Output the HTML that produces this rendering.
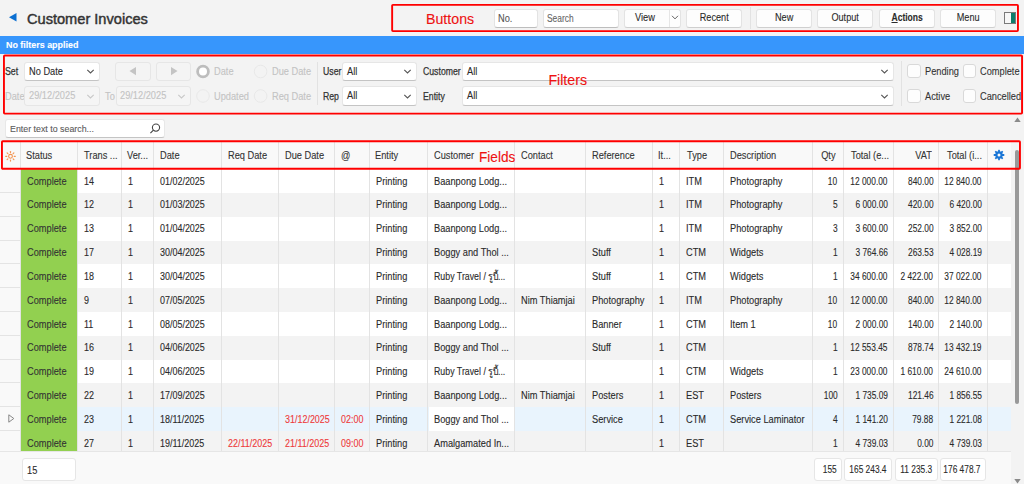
<!DOCTYPE html>
<html><head><meta charset="utf-8"><style>
html,body{margin:0;padding:0;}
body{width:1024px;height:484px;overflow:hidden;position:relative;background:#f3f3f3;font-family:"Liberation Sans", sans-serif;}
div{font-family:"Liberation Sans", sans-serif;-webkit-text-stroke:0.1px currentColor;}
</style></head><body>
<svg style="position:absolute;left:0;top:0" width="30" height="34"><path d="M16.5 13 L9 17.2 L16.5 21.5 Z" fill="#0b6fd1"/></svg><div style="position:absolute;left:27px;top:11.64px;font-size:14.6px;line-height:14.6px;color:#333;font-weight:400;white-space:nowrap;-webkit-text-stroke:0.45px #333;">Customer Invoices</div><div style="position:absolute;left:426px;top:11.68px;font-size:14.2px;line-height:14.2px;color:#ee1111;font-weight:400;white-space:nowrap;">Buttons</div><div style="position:absolute;left:493.5px;top:9px;width:44.5px;height:19px;background:#fff;border:1px solid #e3e3e3;border-bottom-color:#bdbdbd;border-radius:3px;box-sizing:border-box;"></div><div style="position:absolute;left:497.8px;top:13.84px;font-size:10px;line-height:10px;color:#555;font-weight:400;white-space:nowrap;transform:scaleX(0.925);transform-origin:left;">No.</div><div style="position:absolute;left:543.3px;top:9px;width:75.7px;height:19px;background:#fff;border:1px solid #e3e3e3;border-bottom-color:#bdbdbd;border-radius:3px;box-sizing:border-box;"></div><div style="position:absolute;left:547.2px;top:13.84px;font-size:10px;line-height:10px;color:#666;font-weight:400;white-space:nowrap;transform:scaleX(0.84);transform-origin:left;">Search</div><div style="position:absolute;left:624px;top:8.7px;width:56.5px;height:19.1px;background:#fdfdfd;border:1px solid #e3e3e3;border-bottom-color:#cfcfcf;border-radius:3px;box-sizing:border-box;"></div><div style="position:absolute;left:622.3px;width:46px;text-align:center;top:13.23px;font-size:10px;line-height:10px;color:#2b2b2b;font-weight:400;white-space:nowrap;transform:scaleX(0.925);">View</div><div style="position:absolute;left:669.2px;top:9.5px;width:1px;height:17.5px;background:#e6e6e6;"></div><svg style="position:absolute;left:671px;top:13px" width="9" height="8"><path d="M1 2.8 L4 5.9 L7 2.8" fill="none" stroke="#555" stroke-width="0.9"/></svg><div style="position:absolute;left:685.7px;top:8.7px;width:56.5px;height:19.1px;background:#fdfdfd;border:1px solid #e3e3e3;border-bottom-color:#cfcfcf;border-radius:3px;box-sizing:border-box;"></div><div style="position:absolute;left:685.7px;width:56.5px;text-align:center;top:13.23px;font-size:10px;line-height:10px;color:#2b2b2b;font-weight:400;white-space:nowrap;transform:scaleX(0.915);">Recent</div><div style="position:absolute;left:749.5px;top:7px;width:1px;height:22px;background:#e2e2e2;"></div><div style="position:absolute;left:755.8px;top:8.7px;width:56.30000000000007px;height:19.1px;background:#fdfdfd;border:1px solid #e3e3e3;border-bottom-color:#cfcfcf;border-radius:3px;box-sizing:border-box;"></div><div style="position:absolute;left:755.8px;width:56.30000000000007px;text-align:center;top:13.23px;font-size:10px;line-height:10px;color:#2b2b2b;font-weight:400;white-space:nowrap;transform:scaleX(0.915);">New</div><div style="position:absolute;left:816.8px;top:8.7px;width:56.30000000000007px;height:19.1px;background:#fdfdfd;border:1px solid #e3e3e3;border-bottom-color:#cfcfcf;border-radius:3px;box-sizing:border-box;"></div><div style="position:absolute;left:816.8px;width:56.30000000000007px;text-align:center;top:13.23px;font-size:10px;line-height:10px;color:#2b2b2b;font-weight:400;white-space:nowrap;transform:scaleX(0.915);">Output</div><div style="position:absolute;left:878.7px;top:8.7px;width:56.299999999999955px;height:19.1px;background:#fdfdfd;border:1px solid #e3e3e3;border-bottom-color:#cfcfcf;border-radius:3px;box-sizing:border-box;"></div><div style="position:absolute;left:878.7px;width:56.299999999999955px;text-align:center;top:13.23px;font-size:10px;line-height:10px;color:#2b2b2b;font-weight:700;white-space:nowrap;transform:scaleX(0.855);"><u>A</u>ctions</div><div style="position:absolute;left:940.2px;top:8.7px;width:56.299999999999955px;height:19.1px;background:#fdfdfd;border:1px solid #e3e3e3;border-bottom-color:#cfcfcf;border-radius:3px;box-sizing:border-box;"></div><div style="position:absolute;left:940.2px;width:56.299999999999955px;text-align:center;top:13.23px;font-size:10px;line-height:10px;color:#2b2b2b;font-weight:400;white-space:nowrap;transform:scaleX(0.915);">Menu</div><div style="position:absolute;left:1004.2px;top:11.5px;width:11.8px;height:12.3px;border:1px solid #7a7a7a;background:#f7f7f7;box-sizing:border-box;"></div><div style="position:absolute;left:1011px;top:12.5px;width:4px;height:10.3px;background:#0e7c6b;"></div><div style="position:absolute;left:0px;top:36px;width:1024px;height:17.7px;background:#3796fc;"></div><div style="position:absolute;left:6px;top:40.17px;font-size:9.6px;line-height:9.6px;color:#fff;font-weight:700;white-space:nowrap;transform:scaleX(0.93);transform-origin:left;">No filters applied</div><div style="position:absolute;left:5px;top:67.03px;font-size:10px;line-height:10px;color:#333;font-weight:400;white-space:nowrap;transform:scaleX(0.88);transform-origin:left;-webkit-text-stroke:0.25px #333;">Set</div><div style="position:absolute;left:24.3px;top:61.5px;width:76.0px;height:19.5px;background:#fff;border:1px solid #e6e6e6;border-bottom-color:#c4c4c4;border-radius:3px;box-sizing:border-box;"></div><div style="position:absolute;left:28.9px;top:66.63px;font-size:10px;line-height:10px;color:#2b2b2b;font-weight:400;white-space:nowrap;transform:scaleX(0.925);transform-origin:left;">No Date</div><svg style="position:absolute;left:86.0px;top:68.0px" width="9" height="7"><path d="M1.3 1.8 L4.5 5 L7.7 1.8" fill="none" stroke="#555" stroke-width="1.1"/></svg><div style="position:absolute;left:5px;top:91.53px;font-size:10px;line-height:10px;color:#c3c3c3;font-weight:400;white-space:nowrap;transform:scaleX(0.925);transform-origin:left;">Date</div><div style="position:absolute;left:24.3px;top:86px;width:76.0px;height:19.5px;background:#f5f5f5;border:1px solid #e6e6e6;border-radius:3px;box-sizing:border-box;"></div><div style="position:absolute;left:28.9px;top:91.13px;font-size:10px;line-height:10px;color:#c3c3c3;font-weight:400;white-space:nowrap;transform:scaleX(0.925);transform-origin:left;">29/12/2025</div><svg style="position:absolute;left:86.0px;top:92.5px" width="9" height="7"><path d="M1.3 1.8 L4.5 5 L7.7 1.8" fill="none" stroke="#c8c8c8" stroke-width="1.1"/></svg><div style="position:absolute;left:115.3px;top:61.5px;width:36px;height:19.8px;background:#f4f4f4;border:1px solid #e6e6e6;border-radius:3px;box-sizing:border-box;"></div><div style="position:absolute;left:156.3px;top:61.5px;width:34.6px;height:19.8px;background:#f4f4f4;border:1px solid #e6e6e6;border-radius:3px;box-sizing:border-box;"></div><svg style="position:absolute;left:0;top:0" width="200" height="90"><path d="M129.5 71 L136 67 L136 75.2 Z" fill="#c4c4c4"/><path d="M177.5 71 L171 67 L171 75.2 Z" fill="#c4c4c4"/></svg><div style="position:absolute;left:104.6px;top:91.53px;font-size:10px;line-height:10px;color:#c3c3c3;font-weight:400;white-space:nowrap;transform:scaleX(0.925);transform-origin:left;">To</div><div style="position:absolute;left:115.6px;top:86px;width:75.80000000000001px;height:19.5px;background:#f5f5f5;border:1px solid #e6e6e6;border-radius:3px;box-sizing:border-box;"></div><div style="position:absolute;left:120.19999999999999px;top:91.13px;font-size:10px;line-height:10px;color:#c3c3c3;font-weight:400;white-space:nowrap;transform:scaleX(0.925);transform-origin:left;">29/12/2025</div><svg style="position:absolute;left:177.1px;top:92.5px" width="9" height="7"><path d="M1.3 1.8 L4.5 5 L7.7 1.8" fill="none" stroke="#c8c8c8" stroke-width="1.1"/></svg><svg style="position:absolute;left:0;top:0" width="320" height="110"><circle cx="203" cy="71.5" r="5.4" fill="#fff" stroke="#bdbdbd" stroke-width="2.8"/><circle cx="260.6" cy="71.5" r="6.3" fill="none" stroke="#e6e6e6" stroke-width="0.9"/><circle cx="203" cy="96" r="6.3" fill="none" stroke="#e6e6e6" stroke-width="0.9"/><circle cx="260.6" cy="96" r="6.3" fill="none" stroke="#e6e6e6" stroke-width="0.9"/></svg><div style="position:absolute;left:214px;top:67.03px;font-size:10px;line-height:10px;color:#c3c3c3;font-weight:400;white-space:nowrap;transform:scaleX(0.925);transform-origin:left;">Date</div><div style="position:absolute;left:271.8px;top:67.03px;font-size:10px;line-height:10px;color:#c3c3c3;font-weight:400;white-space:nowrap;transform:scaleX(0.925);transform-origin:left;">Due Date</div><div style="position:absolute;left:214px;top:91.53px;font-size:10px;line-height:10px;color:#c3c3c3;font-weight:400;white-space:nowrap;transform:scaleX(0.925);transform-origin:left;">Updated</div><div style="position:absolute;left:271.8px;top:91.53px;font-size:10px;line-height:10px;color:#c3c3c3;font-weight:400;white-space:nowrap;transform:scaleX(0.925);transform-origin:left;">Req Date</div><div style="position:absolute;left:316.5px;top:61.5px;width:1px;height:43.5px;background:#e2e2e2;"></div><div style="position:absolute;left:322.5px;top:67.03px;font-size:10px;line-height:10px;color:#333;font-weight:400;white-space:nowrap;transform:scaleX(0.87);transform-origin:left;-webkit-text-stroke:0.25px #333;">User</div><div style="position:absolute;left:341.9px;top:61.5px;width:75.40000000000003px;height:19.5px;background:#fff;border:1px solid #e6e6e6;border-bottom-color:#c4c4c4;border-radius:3px;box-sizing:border-box;"></div><div style="position:absolute;left:346.5px;top:66.63px;font-size:10px;line-height:10px;color:#2b2b2b;font-weight:400;white-space:nowrap;transform:scaleX(0.925);transform-origin:left;">All</div><svg style="position:absolute;left:403.0px;top:68.0px" width="9" height="7"><path d="M1.3 1.8 L4.5 5 L7.7 1.8" fill="none" stroke="#555" stroke-width="1.1"/></svg><div style="position:absolute;left:322.5px;top:91.53px;font-size:10px;line-height:10px;color:#333;font-weight:400;white-space:nowrap;transform:scaleX(0.87);transform-origin:left;-webkit-text-stroke:0.25px #333;">Rep</div><div style="position:absolute;left:341.9px;top:86px;width:75.40000000000003px;height:19.5px;background:#fff;border:1px solid #e6e6e6;border-bottom-color:#c4c4c4;border-radius:3px;box-sizing:border-box;"></div><div style="position:absolute;left:346.5px;top:91.13px;font-size:10px;line-height:10px;color:#2b2b2b;font-weight:400;white-space:nowrap;transform:scaleX(0.925);transform-origin:left;">All</div><svg style="position:absolute;left:403.0px;top:92.5px" width="9" height="7"><path d="M1.3 1.8 L4.5 5 L7.7 1.8" fill="none" stroke="#555" stroke-width="1.1"/></svg><div style="position:absolute;left:422.5px;top:67.03px;font-size:10px;line-height:10px;color:#333;font-weight:400;white-space:nowrap;transform:scaleX(0.87);transform-origin:left;-webkit-text-stroke:0.25px #333;">Customer</div><div style="position:absolute;left:461.9px;top:61.5px;width:432.5px;height:19.5px;background:#fff;border:1px solid #e6e6e6;border-bottom-color:#c4c4c4;border-radius:3px;box-sizing:border-box;"></div><div style="position:absolute;left:466.5px;top:66.63px;font-size:10px;line-height:10px;color:#2b2b2b;font-weight:400;white-space:nowrap;transform:scaleX(0.925);transform-origin:left;">All</div><svg style="position:absolute;left:880.1px;top:68.0px" width="9" height="7"><path d="M1.3 1.8 L4.5 5 L7.7 1.8" fill="none" stroke="#555" stroke-width="1.1"/></svg><div style="position:absolute;left:422.5px;top:91.53px;font-size:10px;line-height:10px;color:#333;font-weight:400;white-space:nowrap;transform:scaleX(0.87);transform-origin:left;-webkit-text-stroke:0.25px #333;">Entity</div><div style="position:absolute;left:461.9px;top:86px;width:432.5px;height:19.5px;background:#fff;border:1px solid #e6e6e6;border-bottom-color:#c4c4c4;border-radius:3px;box-sizing:border-box;"></div><div style="position:absolute;left:466.5px;top:91.13px;font-size:10px;line-height:10px;color:#2b2b2b;font-weight:400;white-space:nowrap;transform:scaleX(0.925);transform-origin:left;">All</div><svg style="position:absolute;left:880.1px;top:92.5px" width="9" height="7"><path d="M1.3 1.8 L4.5 5 L7.7 1.8" fill="none" stroke="#555" stroke-width="1.1"/></svg><div style="position:absolute;left:901.3px;top:61px;width:1px;height:44.5px;background:#e2e2e2;"></div><div style="position:absolute;left:907.2px;top:64.3px;width:13.4px;height:13.8px;background:#fdfdfd;border:1px solid #d9d9d9;border-radius:3px;box-sizing:border-box;"></div><div style="position:absolute;left:962.5px;top:64.3px;width:13.4px;height:13.8px;background:#fdfdfd;border:1px solid #d9d9d9;border-radius:3px;box-sizing:border-box;"></div><div style="position:absolute;left:907.2px;top:89.2px;width:13.4px;height:13.8px;background:#fdfdfd;border:1px solid #d9d9d9;border-radius:3px;box-sizing:border-box;"></div><div style="position:absolute;left:962.5px;top:89.2px;width:13.4px;height:13.8px;background:#fdfdfd;border:1px solid #d9d9d9;border-radius:3px;box-sizing:border-box;"></div><div style="position:absolute;left:925px;top:67.03px;font-size:10px;line-height:10px;color:#333;font-weight:400;white-space:nowrap;transform:scaleX(0.925);transform-origin:left;">Pending</div><div style="position:absolute;left:980.4px;top:67.03px;font-size:10px;line-height:10px;color:#333;font-weight:400;white-space:nowrap;transform:scaleX(0.925);transform-origin:left;">Complete</div><div style="position:absolute;left:925px;top:91.53px;font-size:10px;line-height:10px;color:#333;font-weight:400;white-space:nowrap;transform:scaleX(0.925);transform-origin:left;">Active</div><div style="position:absolute;left:980.4px;top:91.53px;font-size:10px;line-height:10px;color:#333;font-weight:400;white-space:nowrap;transform:scaleX(0.925);transform-origin:left;">Cancelled</div><div style="position:absolute;left:548.4px;top:73.28px;font-size:14.2px;line-height:14.2px;color:#ee1111;font-weight:400;white-space:nowrap;">Filters</div><div style="position:absolute;left:5.4px;top:118.9px;width:160px;height:19.3px;background:#fff;border:1px solid #e8e8e8;border-bottom-color:#c4c4c4;border-radius:3px;box-sizing:border-box;"></div><div style="position:absolute;left:9.7px;top:124.73px;font-size:9.3px;line-height:9.3px;color:#5a5a5a;font-weight:400;white-space:nowrap;transform:scaleX(0.95);transform-origin:left;">Enter text to search...</div><svg style="position:absolute;left:148px;top:122px" width="14" height="13"><circle cx="8" cy="5.6" r="3.6" fill="none" stroke="#444" stroke-width="1.1"/><path d="M5.4 8.2 L2.4 11.2" stroke="#444" stroke-width="1.2"/></svg><svg style="position:absolute;left:1012px;top:115px" width="12" height="10"><path d="M2.3 7 L5.5 2.5 L8.7 7 Z" fill="#8a8a8a"/></svg><div style="position:absolute;left:0px;top:142.4px;width:1011px;height:26.69999999999999px;background:#f9f9f9;"></div><div style="position:absolute;left:20.4px;top:169.1px;width:990.6px;height:23.82px;background:#ffffff;"></div><div style="position:absolute;left:0px;top:169.1px;width:20.4px;height:23.82px;background:#f9f9f9;"></div><div style="position:absolute;left:0px;top:192px;width:20px;height:1px;background:#e4e4e4;"></div><div style="position:absolute;left:20.4px;top:192.92px;width:990.6px;height:23.82px;background:#f3f3f3;"></div><div style="position:absolute;left:0px;top:192.92px;width:20.4px;height:23.82px;background:#f9f9f9;"></div><div style="position:absolute;left:0px;top:216px;width:20px;height:1px;background:#e4e4e4;"></div><div style="position:absolute;left:20.4px;top:216.74px;width:990.6px;height:23.82px;background:#ffffff;"></div><div style="position:absolute;left:0px;top:216.74px;width:20.4px;height:23.82px;background:#f9f9f9;"></div><div style="position:absolute;left:0px;top:240px;width:20px;height:1px;background:#e4e4e4;"></div><div style="position:absolute;left:20.4px;top:240.56px;width:990.6px;height:23.82px;background:#f3f3f3;"></div><div style="position:absolute;left:0px;top:240.56px;width:20.4px;height:23.82px;background:#f9f9f9;"></div><div style="position:absolute;left:0px;top:263px;width:20px;height:1px;background:#e4e4e4;"></div><div style="position:absolute;left:20.4px;top:264.38px;width:990.6px;height:23.82px;background:#ffffff;"></div><div style="position:absolute;left:0px;top:264.38px;width:20.4px;height:23.82px;background:#f9f9f9;"></div><div style="position:absolute;left:0px;top:287px;width:20px;height:1px;background:#e4e4e4;"></div><div style="position:absolute;left:20.4px;top:288.2px;width:990.6px;height:23.82px;background:#f3f3f3;"></div><div style="position:absolute;left:0px;top:288.2px;width:20.4px;height:23.82px;background:#f9f9f9;"></div><div style="position:absolute;left:0px;top:311px;width:20px;height:1px;background:#e4e4e4;"></div><div style="position:absolute;left:20.4px;top:312.02px;width:990.6px;height:23.82px;background:#ffffff;"></div><div style="position:absolute;left:0px;top:312.02px;width:20.4px;height:23.82px;background:#f9f9f9;"></div><div style="position:absolute;left:0px;top:335px;width:20px;height:1px;background:#e4e4e4;"></div><div style="position:absolute;left:20.4px;top:335.84px;width:990.6px;height:23.82px;background:#f3f3f3;"></div><div style="position:absolute;left:0px;top:335.84px;width:20.4px;height:23.82px;background:#f9f9f9;"></div><div style="position:absolute;left:0px;top:359px;width:20px;height:1px;background:#e4e4e4;"></div><div style="position:absolute;left:20.4px;top:359.66px;width:990.6px;height:23.82px;background:#ffffff;"></div><div style="position:absolute;left:0px;top:359.66px;width:20.4px;height:23.82px;background:#f9f9f9;"></div><div style="position:absolute;left:0px;top:382px;width:20px;height:1px;background:#e4e4e4;"></div><div style="position:absolute;left:20.4px;top:383.48px;width:990.6px;height:23.82px;background:#f3f3f3;"></div><div style="position:absolute;left:0px;top:383.48px;width:20.4px;height:23.82px;background:#f9f9f9;"></div><div style="position:absolute;left:0px;top:406px;width:20px;height:1px;background:#e4e4e4;"></div><div style="position:absolute;left:20.4px;top:407.3px;width:990.6px;height:23.82px;background:#e9f4fd;"></div><div style="position:absolute;left:0px;top:407.3px;width:20.4px;height:23.82px;background:#f9f9f9;"></div><div style="position:absolute;left:0px;top:430px;width:20px;height:1px;background:#e4e4e4;"></div><div style="position:absolute;left:20.4px;top:431.12px;width:990.6px;height:19.98px;background:#f3f3f3;"></div><div style="position:absolute;left:0px;top:431.12px;width:20.4px;height:19.98px;background:#f9f9f9;"></div><div style="position:absolute;left:21px;top:169.1px;width:56.3px;height:282.0px;background:#92d050;"></div><div style="position:absolute;left:428.5px;top:407.29999999999995px;width:86.20000000000005px;height:23.82px;background:#ffffff;"></div><div style="position:absolute;left:19.9px;top:142.4px;width:1px;height:308.70000000000005px;background:#e3e3e3;"></div><div style="position:absolute;left:76.8px;top:142.4px;width:1px;height:308.70000000000005px;background:#e3e3e3;"></div><div style="position:absolute;left:120.7px;top:142.4px;width:1px;height:308.70000000000005px;background:#e3e3e3;"></div><div style="position:absolute;left:152.9px;top:142.4px;width:1px;height:308.70000000000005px;background:#e3e3e3;"></div><div style="position:absolute;left:221.1px;top:142.4px;width:1px;height:308.70000000000005px;background:#e3e3e3;"></div><div style="position:absolute;left:278.2px;top:142.4px;width:1px;height:308.70000000000005px;background:#e3e3e3;"></div><div style="position:absolute;left:334.0px;top:142.4px;width:1px;height:308.70000000000005px;background:#e3e3e3;"></div><div style="position:absolute;left:368.8px;top:142.4px;width:1px;height:308.70000000000005px;background:#e3e3e3;"></div><div style="position:absolute;left:427.0px;top:142.4px;width:1px;height:308.70000000000005px;background:#e3e3e3;"></div><div style="position:absolute;left:514.2px;top:142.4px;width:1px;height:308.70000000000005px;background:#e3e3e3;"></div><div style="position:absolute;left:584.9px;top:142.4px;width:1px;height:308.70000000000005px;background:#e3e3e3;"></div><div style="position:absolute;left:652.2px;top:142.4px;width:1px;height:308.70000000000005px;background:#e3e3e3;"></div><div style="position:absolute;left:679.2px;top:142.4px;width:1px;height:308.70000000000005px;background:#e3e3e3;"></div><div style="position:absolute;left:722.9px;top:142.4px;width:1px;height:308.70000000000005px;background:#e3e3e3;"></div><div style="position:absolute;left:812.1px;top:142.4px;width:1px;height:308.70000000000005px;background:#e3e3e3;"></div><div style="position:absolute;left:842.6px;top:142.4px;width:1px;height:308.70000000000005px;background:#e3e3e3;"></div><div style="position:absolute;left:893.1px;top:142.4px;width:1px;height:308.70000000000005px;background:#e3e3e3;"></div><div style="position:absolute;left:938.4px;top:142.4px;width:1px;height:308.70000000000005px;background:#e3e3e3;"></div><div style="position:absolute;left:987.2px;top:142.4px;width:1px;height:308.70000000000005px;background:#e3e3e3;"></div><div style="position:absolute;left:26.4px;top:150.53px;font-size:10px;line-height:10px;color:#333;font-weight:400;white-space:nowrap;transform:scaleX(0.925);transform-origin:left;">Status</div><div style="position:absolute;left:83.5px;top:150.53px;font-size:10px;line-height:10px;color:#333;font-weight:400;white-space:nowrap;transform:scaleX(0.925);transform-origin:left;">Trans ...</div><div style="position:absolute;left:127px;top:150.53px;font-size:10px;line-height:10px;color:#333;font-weight:400;white-space:nowrap;transform:scaleX(0.925);transform-origin:left;">Ver...</div><div style="position:absolute;left:159.5px;top:150.53px;font-size:10px;line-height:10px;color:#333;font-weight:400;white-space:nowrap;transform:scaleX(0.925);transform-origin:left;">Date</div><div style="position:absolute;left:227.9px;top:150.53px;font-size:10px;line-height:10px;color:#333;font-weight:400;white-space:nowrap;transform:scaleX(0.925);transform-origin:left;">Req Date</div><div style="position:absolute;left:284.6px;top:150.53px;font-size:10px;line-height:10px;color:#333;font-weight:400;white-space:nowrap;transform:scaleX(0.925);transform-origin:left;">Due Date</div><div style="position:absolute;left:340.8px;top:150.53px;font-size:10px;line-height:10px;color:#333;font-weight:400;white-space:nowrap;transform:scaleX(0.925);transform-origin:left;">@</div><div style="position:absolute;left:375.2px;top:150.53px;font-size:10px;line-height:10px;color:#333;font-weight:400;white-space:nowrap;transform:scaleX(0.925);transform-origin:left;">Entity</div><div style="position:absolute;left:433.8px;top:150.53px;font-size:10px;line-height:10px;color:#333;font-weight:400;white-space:nowrap;transform:scaleX(0.925);transform-origin:left;">Customer</div><div style="position:absolute;left:521px;top:150.53px;font-size:10px;line-height:10px;color:#333;font-weight:400;white-space:nowrap;transform:scaleX(0.925);transform-origin:left;">Contact</div><div style="position:absolute;left:591.7px;top:150.53px;font-size:10px;line-height:10px;color:#333;font-weight:400;white-space:nowrap;transform:scaleX(0.925);transform-origin:left;">Reference</div><div style="position:absolute;left:658px;top:150.53px;font-size:10px;line-height:10px;color:#333;font-weight:400;white-space:nowrap;transform:scaleX(0.925);transform-origin:left;">It...</div><div style="position:absolute;left:686.6px;top:150.53px;font-size:10px;line-height:10px;color:#333;font-weight:400;white-space:nowrap;transform:scaleX(0.925);transform-origin:left;">Type</div><div style="position:absolute;left:730px;top:150.53px;font-size:10px;line-height:10px;color:#333;font-weight:400;white-space:nowrap;transform:scaleX(0.925);transform-origin:left;">Description</div><div style="position:absolute;right:188px;top:150.53px;font-size:10px;line-height:10px;color:#333;font-weight:400;white-space:nowrap;transform:scaleX(0.925);transform-origin:right;">Qty</div><div style="position:absolute;left:850.8px;top:150.53px;font-size:10px;line-height:10px;color:#333;font-weight:400;white-space:nowrap;transform:scaleX(0.925);transform-origin:left;">Total (e...</div><div style="position:absolute;right:92.29999999999995px;top:150.53px;font-size:10px;line-height:10px;color:#333;font-weight:400;white-space:nowrap;transform:scaleX(0.925);transform-origin:right;">VAT</div><div style="position:absolute;left:946.6px;top:150.53px;font-size:10px;line-height:10px;color:#333;font-weight:400;white-space:nowrap;transform:scaleX(0.925);transform-origin:left;">Total (i...</div><svg style="position:absolute;left:4px;top:150px" width="13" height="13"><circle cx="6.5" cy="6.3" r="1.9" fill="none" stroke="#f39552" stroke-width="1.1"/><line x1="10.20" y1="6.30" x2="11.30" y2="6.30" stroke="#f39552" stroke-width="1.2" stroke-linecap="round"/><line x1="9.12" y1="8.92" x2="9.89" y2="9.69" stroke="#f39552" stroke-width="1.2" stroke-linecap="round"/><line x1="6.50" y1="10.00" x2="6.50" y2="11.10" stroke="#f39552" stroke-width="1.2" stroke-linecap="round"/><line x1="3.88" y1="8.92" x2="3.11" y2="9.69" stroke="#f39552" stroke-width="1.2" stroke-linecap="round"/><line x1="2.80" y1="6.30" x2="1.70" y2="6.30" stroke="#f39552" stroke-width="1.2" stroke-linecap="round"/><line x1="3.88" y1="3.68" x2="3.11" y2="2.91" stroke="#f39552" stroke-width="1.2" stroke-linecap="round"/><line x1="6.50" y1="2.60" x2="6.50" y2="1.50" stroke="#f39552" stroke-width="1.2" stroke-linecap="round"/><line x1="9.12" y1="3.68" x2="9.89" y2="2.91" stroke="#f39552" stroke-width="1.2" stroke-linecap="round"/></svg><svg style="position:absolute;left:993.4px;top:149.2px" width="12" height="12" viewBox="0 0 12 12"><g fill="#1a76d6"><rect x="5.1" y="0.7" width="1.8" height="2.6" rx="0.5" transform="rotate(0 6 6)"/><rect x="5.1" y="0.7" width="1.8" height="2.6" rx="0.5" transform="rotate(45 6 6)"/><rect x="5.1" y="0.7" width="1.8" height="2.6" rx="0.5" transform="rotate(90 6 6)"/><rect x="5.1" y="0.7" width="1.8" height="2.6" rx="0.5" transform="rotate(135 6 6)"/><rect x="5.1" y="0.7" width="1.8" height="2.6" rx="0.5" transform="rotate(180 6 6)"/><rect x="5.1" y="0.7" width="1.8" height="2.6" rx="0.5" transform="rotate(225 6 6)"/><rect x="5.1" y="0.7" width="1.8" height="2.6" rx="0.5" transform="rotate(270 6 6)"/><rect x="5.1" y="0.7" width="1.8" height="2.6" rx="0.5" transform="rotate(315 6 6)"/><circle cx="6" cy="6" r="3.7"/></g><circle cx="6" cy="6" r="1.5" fill="#f9f9f9"/></svg><div style="position:absolute;left:1015px;top:149.8px;width:4.3px;height:254px;background:#999999;border-radius:3px;"></div><div style="position:absolute;left:479px;top:150.28px;font-size:14.2px;line-height:14.2px;color:#ee1111;font-weight:400;white-space:nowrap;transform:scaleX(0.96);transform-origin:left;">Fields</div><div style="position:absolute;left:0;top:169.1px;width:1024px;height:282.00px;overflow:hidden"><div style="position:absolute;left:26.6px;top:7.54px;font-size:10px;line-height:10px;color:#333;font-weight:400;white-space:nowrap;transform:scaleX(0.925);transform-origin:left;">Complete</div><div style="position:absolute;left:83.6px;top:7.54px;font-size:10px;line-height:10px;color:#2a2a2a;font-weight:400;white-space:nowrap;transform:scaleX(0.895);transform-origin:left;">14</div><div style="position:absolute;left:127.5px;top:7.54px;font-size:10px;line-height:10px;color:#2a2a2a;font-weight:400;white-space:nowrap;transform:scaleX(0.895);transform-origin:left;">1</div><div style="position:absolute;left:159.70000000000002px;top:7.54px;font-size:10px;line-height:10px;color:#2a2a2a;font-weight:400;white-space:nowrap;transform:scaleX(0.895);transform-origin:left;">01/02/2025</div><div style="position:absolute;left:375.6px;top:7.54px;font-size:10px;line-height:10px;color:#2a2a2a;font-weight:400;white-space:nowrap;transform:scaleX(0.925);transform-origin:left;">Printing</div><div style="position:absolute;left:433.8px;top:7.54px;font-size:10px;line-height:10px;color:#2a2a2a;font-weight:400;white-space:nowrap;transform:scaleX(0.925);transform-origin:left;">Baanpong Lodg...</div><div style="position:absolute;left:659.0px;top:7.54px;font-size:10px;line-height:10px;color:#2a2a2a;font-weight:400;white-space:nowrap;transform:scaleX(0.895);transform-origin:left;">1</div><div style="position:absolute;left:686.0px;top:7.54px;font-size:10px;line-height:10px;color:#2a2a2a;font-weight:400;white-space:nowrap;transform:scaleX(0.925);transform-origin:left;">ITM</div><div style="position:absolute;left:729.6999999999999px;top:7.54px;font-size:10px;line-height:10px;color:#2a2a2a;font-weight:400;white-space:nowrap;transform:scaleX(0.925);transform-origin:left;">Photography</div><div style="position:absolute;right:186.69999999999993px;top:7.54px;font-size:10px;line-height:10px;color:#2a2a2a;font-weight:400;white-space:nowrap;transform:scaleX(0.835);transform-origin:right;">10</div><div style="position:absolute;right:136.19999999999993px;top:7.54px;font-size:10px;line-height:10px;color:#2a2a2a;font-weight:400;white-space:nowrap;transform:scaleX(0.835);transform-origin:right;">12 000.00</div><div style="position:absolute;right:90.89999999999998px;top:7.54px;font-size:10px;line-height:10px;color:#2a2a2a;font-weight:400;white-space:nowrap;transform:scaleX(0.835);transform-origin:right;">840.00</div><div style="position:absolute;right:42.09999999999991px;top:7.54px;font-size:10px;line-height:10px;color:#2a2a2a;font-weight:400;white-space:nowrap;transform:scaleX(0.835);transform-origin:right;">12 840.00</div><div style="position:absolute;left:26.6px;top:31.36px;font-size:10px;line-height:10px;color:#333;font-weight:400;white-space:nowrap;transform:scaleX(0.925);transform-origin:left;">Complete</div><div style="position:absolute;left:83.6px;top:31.36px;font-size:10px;line-height:10px;color:#2a2a2a;font-weight:400;white-space:nowrap;transform:scaleX(0.895);transform-origin:left;">12</div><div style="position:absolute;left:127.5px;top:31.36px;font-size:10px;line-height:10px;color:#2a2a2a;font-weight:400;white-space:nowrap;transform:scaleX(0.895);transform-origin:left;">1</div><div style="position:absolute;left:159.70000000000002px;top:31.36px;font-size:10px;line-height:10px;color:#2a2a2a;font-weight:400;white-space:nowrap;transform:scaleX(0.895);transform-origin:left;">01/03/2025</div><div style="position:absolute;left:375.6px;top:31.36px;font-size:10px;line-height:10px;color:#2a2a2a;font-weight:400;white-space:nowrap;transform:scaleX(0.925);transform-origin:left;">Printing</div><div style="position:absolute;left:433.8px;top:31.36px;font-size:10px;line-height:10px;color:#2a2a2a;font-weight:400;white-space:nowrap;transform:scaleX(0.925);transform-origin:left;">Baanpong Lodg...</div><div style="position:absolute;left:659.0px;top:31.36px;font-size:10px;line-height:10px;color:#2a2a2a;font-weight:400;white-space:nowrap;transform:scaleX(0.895);transform-origin:left;">1</div><div style="position:absolute;left:686.0px;top:31.36px;font-size:10px;line-height:10px;color:#2a2a2a;font-weight:400;white-space:nowrap;transform:scaleX(0.925);transform-origin:left;">ITM</div><div style="position:absolute;left:729.6999999999999px;top:31.36px;font-size:10px;line-height:10px;color:#2a2a2a;font-weight:400;white-space:nowrap;transform:scaleX(0.925);transform-origin:left;">Photography</div><div style="position:absolute;right:186.69999999999993px;top:31.36px;font-size:10px;line-height:10px;color:#2a2a2a;font-weight:400;white-space:nowrap;transform:scaleX(0.835);transform-origin:right;">5</div><div style="position:absolute;right:136.19999999999993px;top:31.36px;font-size:10px;line-height:10px;color:#2a2a2a;font-weight:400;white-space:nowrap;transform:scaleX(0.835);transform-origin:right;">6 000.00</div><div style="position:absolute;right:90.89999999999998px;top:31.36px;font-size:10px;line-height:10px;color:#2a2a2a;font-weight:400;white-space:nowrap;transform:scaleX(0.835);transform-origin:right;">420.00</div><div style="position:absolute;right:42.09999999999991px;top:31.36px;font-size:10px;line-height:10px;color:#2a2a2a;font-weight:400;white-space:nowrap;transform:scaleX(0.835);transform-origin:right;">6 420.00</div><div style="position:absolute;left:26.6px;top:55.17px;font-size:10px;line-height:10px;color:#333;font-weight:400;white-space:nowrap;transform:scaleX(0.925);transform-origin:left;">Complete</div><div style="position:absolute;left:83.6px;top:55.17px;font-size:10px;line-height:10px;color:#2a2a2a;font-weight:400;white-space:nowrap;transform:scaleX(0.895);transform-origin:left;">13</div><div style="position:absolute;left:127.5px;top:55.17px;font-size:10px;line-height:10px;color:#2a2a2a;font-weight:400;white-space:nowrap;transform:scaleX(0.895);transform-origin:left;">1</div><div style="position:absolute;left:159.70000000000002px;top:55.17px;font-size:10px;line-height:10px;color:#2a2a2a;font-weight:400;white-space:nowrap;transform:scaleX(0.895);transform-origin:left;">01/04/2025</div><div style="position:absolute;left:375.6px;top:55.17px;font-size:10px;line-height:10px;color:#2a2a2a;font-weight:400;white-space:nowrap;transform:scaleX(0.925);transform-origin:left;">Printing</div><div style="position:absolute;left:433.8px;top:55.17px;font-size:10px;line-height:10px;color:#2a2a2a;font-weight:400;white-space:nowrap;transform:scaleX(0.925);transform-origin:left;">Baanpong Lodg...</div><div style="position:absolute;left:659.0px;top:55.17px;font-size:10px;line-height:10px;color:#2a2a2a;font-weight:400;white-space:nowrap;transform:scaleX(0.895);transform-origin:left;">1</div><div style="position:absolute;left:686.0px;top:55.17px;font-size:10px;line-height:10px;color:#2a2a2a;font-weight:400;white-space:nowrap;transform:scaleX(0.925);transform-origin:left;">ITM</div><div style="position:absolute;left:729.6999999999999px;top:55.17px;font-size:10px;line-height:10px;color:#2a2a2a;font-weight:400;white-space:nowrap;transform:scaleX(0.925);transform-origin:left;">Photography</div><div style="position:absolute;right:186.69999999999993px;top:55.17px;font-size:10px;line-height:10px;color:#2a2a2a;font-weight:400;white-space:nowrap;transform:scaleX(0.835);transform-origin:right;">3</div><div style="position:absolute;right:136.19999999999993px;top:55.17px;font-size:10px;line-height:10px;color:#2a2a2a;font-weight:400;white-space:nowrap;transform:scaleX(0.835);transform-origin:right;">3 600.00</div><div style="position:absolute;right:90.89999999999998px;top:55.17px;font-size:10px;line-height:10px;color:#2a2a2a;font-weight:400;white-space:nowrap;transform:scaleX(0.835);transform-origin:right;">252.00</div><div style="position:absolute;right:42.09999999999991px;top:55.17px;font-size:10px;line-height:10px;color:#2a2a2a;font-weight:400;white-space:nowrap;transform:scaleX(0.835);transform-origin:right;">3 852.00</div><div style="position:absolute;left:26.6px;top:79.00px;font-size:10px;line-height:10px;color:#333;font-weight:400;white-space:nowrap;transform:scaleX(0.925);transform-origin:left;">Complete</div><div style="position:absolute;left:83.6px;top:79.00px;font-size:10px;line-height:10px;color:#2a2a2a;font-weight:400;white-space:nowrap;transform:scaleX(0.895);transform-origin:left;">17</div><div style="position:absolute;left:127.5px;top:79.00px;font-size:10px;line-height:10px;color:#2a2a2a;font-weight:400;white-space:nowrap;transform:scaleX(0.895);transform-origin:left;">1</div><div style="position:absolute;left:159.70000000000002px;top:79.00px;font-size:10px;line-height:10px;color:#2a2a2a;font-weight:400;white-space:nowrap;transform:scaleX(0.895);transform-origin:left;">30/04/2025</div><div style="position:absolute;left:375.6px;top:79.00px;font-size:10px;line-height:10px;color:#2a2a2a;font-weight:400;white-space:nowrap;transform:scaleX(0.925);transform-origin:left;">Printing</div><div style="position:absolute;left:433.8px;top:79.00px;font-size:10px;line-height:10px;color:#2a2a2a;font-weight:400;white-space:nowrap;transform:scaleX(0.925);transform-origin:left;">Boggy and Thol ...</div><div style="position:absolute;left:591.6999999999999px;top:79.00px;font-size:10px;line-height:10px;color:#2a2a2a;font-weight:400;white-space:nowrap;transform:scaleX(0.925);transform-origin:left;">Stuff</div><div style="position:absolute;left:659.0px;top:79.00px;font-size:10px;line-height:10px;color:#2a2a2a;font-weight:400;white-space:nowrap;transform:scaleX(0.895);transform-origin:left;">1</div><div style="position:absolute;left:686.0px;top:79.00px;font-size:10px;line-height:10px;color:#2a2a2a;font-weight:400;white-space:nowrap;transform:scaleX(0.925);transform-origin:left;">CTM</div><div style="position:absolute;left:729.6999999999999px;top:79.00px;font-size:10px;line-height:10px;color:#2a2a2a;font-weight:400;white-space:nowrap;transform:scaleX(0.925);transform-origin:left;">Widgets</div><div style="position:absolute;right:186.69999999999993px;top:79.00px;font-size:10px;line-height:10px;color:#2a2a2a;font-weight:400;white-space:nowrap;transform:scaleX(0.835);transform-origin:right;">1</div><div style="position:absolute;right:136.19999999999993px;top:79.00px;font-size:10px;line-height:10px;color:#2a2a2a;font-weight:400;white-space:nowrap;transform:scaleX(0.835);transform-origin:right;">3 764.66</div><div style="position:absolute;right:90.89999999999998px;top:79.00px;font-size:10px;line-height:10px;color:#2a2a2a;font-weight:400;white-space:nowrap;transform:scaleX(0.835);transform-origin:right;">263.53</div><div style="position:absolute;right:42.09999999999991px;top:79.00px;font-size:10px;line-height:10px;color:#2a2a2a;font-weight:400;white-space:nowrap;transform:scaleX(0.835);transform-origin:right;">4 028.19</div><div style="position:absolute;left:26.6px;top:102.81px;font-size:10px;line-height:10px;color:#333;font-weight:400;white-space:nowrap;transform:scaleX(0.925);transform-origin:left;">Complete</div><div style="position:absolute;left:83.6px;top:102.81px;font-size:10px;line-height:10px;color:#2a2a2a;font-weight:400;white-space:nowrap;transform:scaleX(0.895);transform-origin:left;">18</div><div style="position:absolute;left:127.5px;top:102.81px;font-size:10px;line-height:10px;color:#2a2a2a;font-weight:400;white-space:nowrap;transform:scaleX(0.895);transform-origin:left;">1</div><div style="position:absolute;left:159.70000000000002px;top:102.81px;font-size:10px;line-height:10px;color:#2a2a2a;font-weight:400;white-space:nowrap;transform:scaleX(0.895);transform-origin:left;">30/04/2025</div><div style="position:absolute;left:375.6px;top:102.81px;font-size:10px;line-height:10px;color:#2a2a2a;font-weight:400;white-space:nowrap;transform:scaleX(0.925);transform-origin:left;">Printing</div><div style="position:absolute;left:433.8px;top:102.81px;font-size:10px;line-height:10px;color:#2a2a2a;font-weight:400;white-space:nowrap;transform:scaleX(0.88);transform-origin:left;">Ruby Travel / รูบี้...</div><div style="position:absolute;left:591.6999999999999px;top:102.81px;font-size:10px;line-height:10px;color:#2a2a2a;font-weight:400;white-space:nowrap;transform:scaleX(0.925);transform-origin:left;">Stuff</div><div style="position:absolute;left:659.0px;top:102.81px;font-size:10px;line-height:10px;color:#2a2a2a;font-weight:400;white-space:nowrap;transform:scaleX(0.895);transform-origin:left;">1</div><div style="position:absolute;left:686.0px;top:102.81px;font-size:10px;line-height:10px;color:#2a2a2a;font-weight:400;white-space:nowrap;transform:scaleX(0.925);transform-origin:left;">CTM</div><div style="position:absolute;left:729.6999999999999px;top:102.81px;font-size:10px;line-height:10px;color:#2a2a2a;font-weight:400;white-space:nowrap;transform:scaleX(0.925);transform-origin:left;">Widgets</div><div style="position:absolute;right:186.69999999999993px;top:102.81px;font-size:10px;line-height:10px;color:#2a2a2a;font-weight:400;white-space:nowrap;transform:scaleX(0.835);transform-origin:right;">1</div><div style="position:absolute;right:136.19999999999993px;top:102.81px;font-size:10px;line-height:10px;color:#2a2a2a;font-weight:400;white-space:nowrap;transform:scaleX(0.835);transform-origin:right;">34 600.00</div><div style="position:absolute;right:90.89999999999998px;top:102.81px;font-size:10px;line-height:10px;color:#2a2a2a;font-weight:400;white-space:nowrap;transform:scaleX(0.835);transform-origin:right;">2 422.00</div><div style="position:absolute;right:42.09999999999991px;top:102.81px;font-size:10px;line-height:10px;color:#2a2a2a;font-weight:400;white-space:nowrap;transform:scaleX(0.835);transform-origin:right;">37 022.00</div><div style="position:absolute;left:26.6px;top:126.63px;font-size:10px;line-height:10px;color:#333;font-weight:400;white-space:nowrap;transform:scaleX(0.925);transform-origin:left;">Complete</div><div style="position:absolute;left:83.6px;top:126.63px;font-size:10px;line-height:10px;color:#2a2a2a;font-weight:400;white-space:nowrap;transform:scaleX(0.895);transform-origin:left;">9</div><div style="position:absolute;left:127.5px;top:126.63px;font-size:10px;line-height:10px;color:#2a2a2a;font-weight:400;white-space:nowrap;transform:scaleX(0.895);transform-origin:left;">1</div><div style="position:absolute;left:159.70000000000002px;top:126.63px;font-size:10px;line-height:10px;color:#2a2a2a;font-weight:400;white-space:nowrap;transform:scaleX(0.895);transform-origin:left;">07/05/2025</div><div style="position:absolute;left:375.6px;top:126.63px;font-size:10px;line-height:10px;color:#2a2a2a;font-weight:400;white-space:nowrap;transform:scaleX(0.925);transform-origin:left;">Printing</div><div style="position:absolute;left:433.8px;top:126.63px;font-size:10px;line-height:10px;color:#2a2a2a;font-weight:400;white-space:nowrap;transform:scaleX(0.925);transform-origin:left;">Baanpong Lodg...</div><div style="position:absolute;left:521.0px;top:126.63px;font-size:10px;line-height:10px;color:#2a2a2a;font-weight:400;white-space:nowrap;transform:scaleX(0.925);transform-origin:left;">Nim Thiamjai</div><div style="position:absolute;left:591.6999999999999px;top:126.63px;font-size:10px;line-height:10px;color:#2a2a2a;font-weight:400;white-space:nowrap;transform:scaleX(0.925);transform-origin:left;">Photography</div><div style="position:absolute;left:659.0px;top:126.63px;font-size:10px;line-height:10px;color:#2a2a2a;font-weight:400;white-space:nowrap;transform:scaleX(0.895);transform-origin:left;">1</div><div style="position:absolute;left:686.0px;top:126.63px;font-size:10px;line-height:10px;color:#2a2a2a;font-weight:400;white-space:nowrap;transform:scaleX(0.925);transform-origin:left;">ITM</div><div style="position:absolute;left:729.6999999999999px;top:126.63px;font-size:10px;line-height:10px;color:#2a2a2a;font-weight:400;white-space:nowrap;transform:scaleX(0.925);transform-origin:left;">Photography</div><div style="position:absolute;right:186.69999999999993px;top:126.63px;font-size:10px;line-height:10px;color:#2a2a2a;font-weight:400;white-space:nowrap;transform:scaleX(0.835);transform-origin:right;">10</div><div style="position:absolute;right:136.19999999999993px;top:126.63px;font-size:10px;line-height:10px;color:#2a2a2a;font-weight:400;white-space:nowrap;transform:scaleX(0.835);transform-origin:right;">12 000.00</div><div style="position:absolute;right:90.89999999999998px;top:126.63px;font-size:10px;line-height:10px;color:#2a2a2a;font-weight:400;white-space:nowrap;transform:scaleX(0.835);transform-origin:right;">840.00</div><div style="position:absolute;right:42.09999999999991px;top:126.63px;font-size:10px;line-height:10px;color:#2a2a2a;font-weight:400;white-space:nowrap;transform:scaleX(0.835);transform-origin:right;">12 840.00</div><div style="position:absolute;left:26.6px;top:150.46px;font-size:10px;line-height:10px;color:#333;font-weight:400;white-space:nowrap;transform:scaleX(0.925);transform-origin:left;">Complete</div><div style="position:absolute;left:83.6px;top:150.46px;font-size:10px;line-height:10px;color:#2a2a2a;font-weight:400;white-space:nowrap;transform:scaleX(0.895);transform-origin:left;">11</div><div style="position:absolute;left:127.5px;top:150.46px;font-size:10px;line-height:10px;color:#2a2a2a;font-weight:400;white-space:nowrap;transform:scaleX(0.895);transform-origin:left;">1</div><div style="position:absolute;left:159.70000000000002px;top:150.46px;font-size:10px;line-height:10px;color:#2a2a2a;font-weight:400;white-space:nowrap;transform:scaleX(0.895);transform-origin:left;">08/05/2025</div><div style="position:absolute;left:375.6px;top:150.46px;font-size:10px;line-height:10px;color:#2a2a2a;font-weight:400;white-space:nowrap;transform:scaleX(0.925);transform-origin:left;">Printing</div><div style="position:absolute;left:433.8px;top:150.46px;font-size:10px;line-height:10px;color:#2a2a2a;font-weight:400;white-space:nowrap;transform:scaleX(0.925);transform-origin:left;">Baanpong Lodg...</div><div style="position:absolute;left:591.6999999999999px;top:150.46px;font-size:10px;line-height:10px;color:#2a2a2a;font-weight:400;white-space:nowrap;transform:scaleX(0.925);transform-origin:left;">Banner</div><div style="position:absolute;left:659.0px;top:150.46px;font-size:10px;line-height:10px;color:#2a2a2a;font-weight:400;white-space:nowrap;transform:scaleX(0.895);transform-origin:left;">1</div><div style="position:absolute;left:686.0px;top:150.46px;font-size:10px;line-height:10px;color:#2a2a2a;font-weight:400;white-space:nowrap;transform:scaleX(0.925);transform-origin:left;">CTM</div><div style="position:absolute;left:729.6999999999999px;top:150.46px;font-size:10px;line-height:10px;color:#2a2a2a;font-weight:400;white-space:nowrap;transform:scaleX(0.925);transform-origin:left;">Item 1</div><div style="position:absolute;right:186.69999999999993px;top:150.46px;font-size:10px;line-height:10px;color:#2a2a2a;font-weight:400;white-space:nowrap;transform:scaleX(0.835);transform-origin:right;">10</div><div style="position:absolute;right:136.19999999999993px;top:150.46px;font-size:10px;line-height:10px;color:#2a2a2a;font-weight:400;white-space:nowrap;transform:scaleX(0.835);transform-origin:right;">2 000.00</div><div style="position:absolute;right:90.89999999999998px;top:150.46px;font-size:10px;line-height:10px;color:#2a2a2a;font-weight:400;white-space:nowrap;transform:scaleX(0.835);transform-origin:right;">140.00</div><div style="position:absolute;right:42.09999999999991px;top:150.46px;font-size:10px;line-height:10px;color:#2a2a2a;font-weight:400;white-space:nowrap;transform:scaleX(0.835);transform-origin:right;">2 140.00</div><div style="position:absolute;left:26.6px;top:174.28px;font-size:10px;line-height:10px;color:#333;font-weight:400;white-space:nowrap;transform:scaleX(0.925);transform-origin:left;">Complete</div><div style="position:absolute;left:83.6px;top:174.28px;font-size:10px;line-height:10px;color:#2a2a2a;font-weight:400;white-space:nowrap;transform:scaleX(0.895);transform-origin:left;">16</div><div style="position:absolute;left:127.5px;top:174.28px;font-size:10px;line-height:10px;color:#2a2a2a;font-weight:400;white-space:nowrap;transform:scaleX(0.895);transform-origin:left;">1</div><div style="position:absolute;left:159.70000000000002px;top:174.28px;font-size:10px;line-height:10px;color:#2a2a2a;font-weight:400;white-space:nowrap;transform:scaleX(0.895);transform-origin:left;">04/06/2025</div><div style="position:absolute;left:375.6px;top:174.28px;font-size:10px;line-height:10px;color:#2a2a2a;font-weight:400;white-space:nowrap;transform:scaleX(0.925);transform-origin:left;">Printing</div><div style="position:absolute;left:433.8px;top:174.28px;font-size:10px;line-height:10px;color:#2a2a2a;font-weight:400;white-space:nowrap;transform:scaleX(0.925);transform-origin:left;">Boggy and Thol ...</div><div style="position:absolute;left:591.6999999999999px;top:174.28px;font-size:10px;line-height:10px;color:#2a2a2a;font-weight:400;white-space:nowrap;transform:scaleX(0.925);transform-origin:left;">Stuff</div><div style="position:absolute;left:659.0px;top:174.28px;font-size:10px;line-height:10px;color:#2a2a2a;font-weight:400;white-space:nowrap;transform:scaleX(0.895);transform-origin:left;">1</div><div style="position:absolute;left:686.0px;top:174.28px;font-size:10px;line-height:10px;color:#2a2a2a;font-weight:400;white-space:nowrap;transform:scaleX(0.925);transform-origin:left;">CTM</div><div style="position:absolute;right:186.69999999999993px;top:174.28px;font-size:10px;line-height:10px;color:#2a2a2a;font-weight:400;white-space:nowrap;transform:scaleX(0.835);transform-origin:right;">1</div><div style="position:absolute;right:136.19999999999993px;top:174.28px;font-size:10px;line-height:10px;color:#2a2a2a;font-weight:400;white-space:nowrap;transform:scaleX(0.835);transform-origin:right;">12 553.45</div><div style="position:absolute;right:90.89999999999998px;top:174.28px;font-size:10px;line-height:10px;color:#2a2a2a;font-weight:400;white-space:nowrap;transform:scaleX(0.835);transform-origin:right;">878.74</div><div style="position:absolute;right:42.09999999999991px;top:174.28px;font-size:10px;line-height:10px;color:#2a2a2a;font-weight:400;white-space:nowrap;transform:scaleX(0.835);transform-origin:right;">13 432.19</div><div style="position:absolute;left:26.6px;top:198.09px;font-size:10px;line-height:10px;color:#333;font-weight:400;white-space:nowrap;transform:scaleX(0.925);transform-origin:left;">Complete</div><div style="position:absolute;left:83.6px;top:198.09px;font-size:10px;line-height:10px;color:#2a2a2a;font-weight:400;white-space:nowrap;transform:scaleX(0.895);transform-origin:left;">19</div><div style="position:absolute;left:127.5px;top:198.09px;font-size:10px;line-height:10px;color:#2a2a2a;font-weight:400;white-space:nowrap;transform:scaleX(0.895);transform-origin:left;">1</div><div style="position:absolute;left:159.70000000000002px;top:198.09px;font-size:10px;line-height:10px;color:#2a2a2a;font-weight:400;white-space:nowrap;transform:scaleX(0.895);transform-origin:left;">04/06/2025</div><div style="position:absolute;left:375.6px;top:198.09px;font-size:10px;line-height:10px;color:#2a2a2a;font-weight:400;white-space:nowrap;transform:scaleX(0.925);transform-origin:left;">Printing</div><div style="position:absolute;left:433.8px;top:198.09px;font-size:10px;line-height:10px;color:#2a2a2a;font-weight:400;white-space:nowrap;transform:scaleX(0.88);transform-origin:left;">Ruby Travel / รูบี้...</div><div style="position:absolute;left:659.0px;top:198.09px;font-size:10px;line-height:10px;color:#2a2a2a;font-weight:400;white-space:nowrap;transform:scaleX(0.895);transform-origin:left;">1</div><div style="position:absolute;left:686.0px;top:198.09px;font-size:10px;line-height:10px;color:#2a2a2a;font-weight:400;white-space:nowrap;transform:scaleX(0.925);transform-origin:left;">CTM</div><div style="position:absolute;left:729.6999999999999px;top:198.09px;font-size:10px;line-height:10px;color:#2a2a2a;font-weight:400;white-space:nowrap;transform:scaleX(0.925);transform-origin:left;">Widgets</div><div style="position:absolute;right:186.69999999999993px;top:198.09px;font-size:10px;line-height:10px;color:#2a2a2a;font-weight:400;white-space:nowrap;transform:scaleX(0.835);transform-origin:right;">1</div><div style="position:absolute;right:136.19999999999993px;top:198.09px;font-size:10px;line-height:10px;color:#2a2a2a;font-weight:400;white-space:nowrap;transform:scaleX(0.835);transform-origin:right;">23 000.00</div><div style="position:absolute;right:90.89999999999998px;top:198.09px;font-size:10px;line-height:10px;color:#2a2a2a;font-weight:400;white-space:nowrap;transform:scaleX(0.835);transform-origin:right;">1 610.00</div><div style="position:absolute;right:42.09999999999991px;top:198.09px;font-size:10px;line-height:10px;color:#2a2a2a;font-weight:400;white-space:nowrap;transform:scaleX(0.835);transform-origin:right;">24 610.00</div><div style="position:absolute;left:26.6px;top:221.91px;font-size:10px;line-height:10px;color:#333;font-weight:400;white-space:nowrap;transform:scaleX(0.925);transform-origin:left;">Complete</div><div style="position:absolute;left:83.6px;top:221.91px;font-size:10px;line-height:10px;color:#2a2a2a;font-weight:400;white-space:nowrap;transform:scaleX(0.895);transform-origin:left;">22</div><div style="position:absolute;left:127.5px;top:221.91px;font-size:10px;line-height:10px;color:#2a2a2a;font-weight:400;white-space:nowrap;transform:scaleX(0.895);transform-origin:left;">1</div><div style="position:absolute;left:159.70000000000002px;top:221.91px;font-size:10px;line-height:10px;color:#2a2a2a;font-weight:400;white-space:nowrap;transform:scaleX(0.895);transform-origin:left;">17/09/2025</div><div style="position:absolute;left:375.6px;top:221.91px;font-size:10px;line-height:10px;color:#2a2a2a;font-weight:400;white-space:nowrap;transform:scaleX(0.925);transform-origin:left;">Printing</div><div style="position:absolute;left:433.8px;top:221.91px;font-size:10px;line-height:10px;color:#2a2a2a;font-weight:400;white-space:nowrap;transform:scaleX(0.925);transform-origin:left;">Baanpong Lodg...</div><div style="position:absolute;left:521.0px;top:221.91px;font-size:10px;line-height:10px;color:#2a2a2a;font-weight:400;white-space:nowrap;transform:scaleX(0.925);transform-origin:left;">Nim Thiamjai</div><div style="position:absolute;left:591.6999999999999px;top:221.91px;font-size:10px;line-height:10px;color:#2a2a2a;font-weight:400;white-space:nowrap;transform:scaleX(0.925);transform-origin:left;">Posters</div><div style="position:absolute;left:659.0px;top:221.91px;font-size:10px;line-height:10px;color:#2a2a2a;font-weight:400;white-space:nowrap;transform:scaleX(0.895);transform-origin:left;">1</div><div style="position:absolute;left:686.0px;top:221.91px;font-size:10px;line-height:10px;color:#2a2a2a;font-weight:400;white-space:nowrap;transform:scaleX(0.925);transform-origin:left;">EST</div><div style="position:absolute;left:729.6999999999999px;top:221.91px;font-size:10px;line-height:10px;color:#2a2a2a;font-weight:400;white-space:nowrap;transform:scaleX(0.925);transform-origin:left;">Posters</div><div style="position:absolute;right:186.69999999999993px;top:221.91px;font-size:10px;line-height:10px;color:#2a2a2a;font-weight:400;white-space:nowrap;transform:scaleX(0.835);transform-origin:right;">100</div><div style="position:absolute;right:136.19999999999993px;top:221.91px;font-size:10px;line-height:10px;color:#2a2a2a;font-weight:400;white-space:nowrap;transform:scaleX(0.835);transform-origin:right;">1 735.09</div><div style="position:absolute;right:90.89999999999998px;top:221.91px;font-size:10px;line-height:10px;color:#2a2a2a;font-weight:400;white-space:nowrap;transform:scaleX(0.835);transform-origin:right;">121.46</div><div style="position:absolute;right:42.09999999999991px;top:221.91px;font-size:10px;line-height:10px;color:#2a2a2a;font-weight:400;white-space:nowrap;transform:scaleX(0.835);transform-origin:right;">1 856.55</div><div style="position:absolute;left:26.6px;top:245.73px;font-size:10px;line-height:10px;color:#333;font-weight:400;white-space:nowrap;transform:scaleX(0.925);transform-origin:left;">Complete</div><div style="position:absolute;left:83.6px;top:245.73px;font-size:10px;line-height:10px;color:#2a2a2a;font-weight:400;white-space:nowrap;transform:scaleX(0.895);transform-origin:left;">23</div><div style="position:absolute;left:127.5px;top:245.73px;font-size:10px;line-height:10px;color:#2a2a2a;font-weight:400;white-space:nowrap;transform:scaleX(0.895);transform-origin:left;">1</div><div style="position:absolute;left:159.70000000000002px;top:245.73px;font-size:10px;line-height:10px;color:#2a2a2a;font-weight:400;white-space:nowrap;transform:scaleX(0.895);transform-origin:left;">18/11/2025</div><div style="position:absolute;left:285.0px;top:245.73px;font-size:10px;line-height:10px;color:#ee3a3a;font-weight:400;white-space:nowrap;transform:scaleX(0.895);transform-origin:left;">31/12/2025</div><div style="position:absolute;left:340.8px;top:245.73px;font-size:10px;line-height:10px;color:#ee3a3a;font-weight:400;white-space:nowrap;transform:scaleX(0.895);transform-origin:left;">02:00</div><div style="position:absolute;left:375.6px;top:245.73px;font-size:10px;line-height:10px;color:#2a2a2a;font-weight:400;white-space:nowrap;transform:scaleX(0.925);transform-origin:left;">Printing</div><div style="position:absolute;left:433.8px;top:245.73px;font-size:10px;line-height:10px;color:#2a2a2a;font-weight:400;white-space:nowrap;transform:scaleX(0.925);transform-origin:left;">Boggy and Thol ...</div><div style="position:absolute;left:591.6999999999999px;top:245.73px;font-size:10px;line-height:10px;color:#2a2a2a;font-weight:400;white-space:nowrap;transform:scaleX(0.925);transform-origin:left;">Service</div><div style="position:absolute;left:659.0px;top:245.73px;font-size:10px;line-height:10px;color:#2a2a2a;font-weight:400;white-space:nowrap;transform:scaleX(0.895);transform-origin:left;">1</div><div style="position:absolute;left:686.0px;top:245.73px;font-size:10px;line-height:10px;color:#2a2a2a;font-weight:400;white-space:nowrap;transform:scaleX(0.925);transform-origin:left;">CTM</div><div style="position:absolute;left:729.6999999999999px;top:245.73px;font-size:10px;line-height:10px;color:#2a2a2a;font-weight:400;white-space:nowrap;transform:scaleX(0.925);transform-origin:left;">Service Laminator</div><div style="position:absolute;right:186.69999999999993px;top:245.73px;font-size:10px;line-height:10px;color:#2a2a2a;font-weight:400;white-space:nowrap;transform:scaleX(0.835);transform-origin:right;">4</div><div style="position:absolute;right:136.19999999999993px;top:245.73px;font-size:10px;line-height:10px;color:#2a2a2a;font-weight:400;white-space:nowrap;transform:scaleX(0.835);transform-origin:right;">1 141.20</div><div style="position:absolute;right:90.89999999999998px;top:245.73px;font-size:10px;line-height:10px;color:#2a2a2a;font-weight:400;white-space:nowrap;transform:scaleX(0.835);transform-origin:right;">79.88</div><div style="position:absolute;right:42.09999999999991px;top:245.73px;font-size:10px;line-height:10px;color:#2a2a2a;font-weight:400;white-space:nowrap;transform:scaleX(0.835);transform-origin:right;">1 221.08</div><div style="position:absolute;left:26.6px;top:269.56px;font-size:10px;line-height:10px;color:#333;font-weight:400;white-space:nowrap;transform:scaleX(0.925);transform-origin:left;">Complete</div><div style="position:absolute;left:83.6px;top:269.56px;font-size:10px;line-height:10px;color:#2a2a2a;font-weight:400;white-space:nowrap;transform:scaleX(0.895);transform-origin:left;">27</div><div style="position:absolute;left:127.5px;top:269.56px;font-size:10px;line-height:10px;color:#2a2a2a;font-weight:400;white-space:nowrap;transform:scaleX(0.895);transform-origin:left;">1</div><div style="position:absolute;left:159.70000000000002px;top:269.56px;font-size:10px;line-height:10px;color:#2a2a2a;font-weight:400;white-space:nowrap;transform:scaleX(0.895);transform-origin:left;">19/11/2025</div><div style="position:absolute;left:227.9px;top:269.56px;font-size:10px;line-height:10px;color:#ee3a3a;font-weight:400;white-space:nowrap;transform:scaleX(0.895);transform-origin:left;">22/11/2025</div><div style="position:absolute;left:285.0px;top:269.56px;font-size:10px;line-height:10px;color:#ee3a3a;font-weight:400;white-space:nowrap;transform:scaleX(0.895);transform-origin:left;">21/11/2025</div><div style="position:absolute;left:340.8px;top:269.56px;font-size:10px;line-height:10px;color:#ee3a3a;font-weight:400;white-space:nowrap;transform:scaleX(0.895);transform-origin:left;">09:00</div><div style="position:absolute;left:375.6px;top:269.56px;font-size:10px;line-height:10px;color:#2a2a2a;font-weight:400;white-space:nowrap;transform:scaleX(0.925);transform-origin:left;">Printing</div><div style="position:absolute;left:433.8px;top:269.56px;font-size:10px;line-height:10px;color:#2a2a2a;font-weight:400;white-space:nowrap;transform:scaleX(0.925);transform-origin:left;">Amalgamated In...</div><div style="position:absolute;left:659.0px;top:269.56px;font-size:10px;line-height:10px;color:#2a2a2a;font-weight:400;white-space:nowrap;transform:scaleX(0.895);transform-origin:left;">1</div><div style="position:absolute;left:686.0px;top:269.56px;font-size:10px;line-height:10px;color:#2a2a2a;font-weight:400;white-space:nowrap;transform:scaleX(0.925);transform-origin:left;">EST</div><div style="position:absolute;right:186.69999999999993px;top:269.56px;font-size:10px;line-height:10px;color:#2a2a2a;font-weight:400;white-space:nowrap;transform:scaleX(0.835);transform-origin:right;">1</div><div style="position:absolute;right:136.19999999999993px;top:269.56px;font-size:10px;line-height:10px;color:#2a2a2a;font-weight:400;white-space:nowrap;transform:scaleX(0.835);transform-origin:right;">4 739.03</div><div style="position:absolute;right:90.89999999999998px;top:269.56px;font-size:10px;line-height:10px;color:#2a2a2a;font-weight:400;white-space:nowrap;transform:scaleX(0.835);transform-origin:right;">0.00</div><div style="position:absolute;right:42.09999999999991px;top:269.56px;font-size:10px;line-height:10px;color:#2a2a2a;font-weight:400;white-space:nowrap;transform:scaleX(0.835);transform-origin:right;">4 739.03</div></div><svg style="position:absolute;left:6px;top:413.29999999999995px" width="10" height="12"><path d="M2.8 1.8 L7.8 5.5 L2.8 9.2 Z" fill="none" stroke="#888" stroke-width="1"/></svg><svg style="position:absolute;left:1012px;top:476px" width="12" height="8"><path d="M2.3 3 L5.5 7.5 L8.7 3 Z" fill="#8a8a8a"/></svg><div style="position:absolute;left:0px;top:451.1px;width:1011px;height:32.89999999999998px;background:#f9f9f9;"></div><div style="position:absolute;left:0px;top:451.1px;width:1011px;height:1px;background:#e6e6e6;"></div><div style="position:absolute;left:21.7px;top:458.3px;width:54.599999999999994px;height:23.1px;background:#fff;border:1px solid #e6e6e6;border-radius:3px;box-sizing:border-box;"></div><div style="position:absolute;left:27.2px;top:465.74px;font-size:10px;line-height:10px;color:#2b2b2b;font-weight:400;white-space:nowrap;transform:scaleX(0.925);transform-origin:left;">15</div><div style="position:absolute;left:813.6px;top:458.3px;width:28.399999999999977px;height:23.1px;background:#fff;border:1px solid #e6e6e6;border-radius:3px;box-sizing:border-box;"></div><div style="position:absolute;right:187.60000000000002px;top:465.04px;font-size:10px;line-height:10px;color:#2a2a2a;font-weight:400;white-space:nowrap;transform:scaleX(0.835);transform-origin:right;">155</div><div style="position:absolute;left:844.2px;top:458.3px;width:48.09999999999991px;height:23.1px;background:#fff;border:1px solid #e6e6e6;border-radius:3px;box-sizing:border-box;"></div><div style="position:absolute;right:137.30000000000007px;top:465.04px;font-size:10px;line-height:10px;color:#2a2a2a;font-weight:400;white-space:nowrap;transform:scaleX(0.835);transform-origin:right;">165 243.4</div><div style="position:absolute;left:894.7px;top:458.3px;width:43.09999999999991px;height:23.1px;background:#fff;border:1px solid #e6e6e6;border-radius:3px;box-sizing:border-box;"></div><div style="position:absolute;right:91.80000000000007px;top:465.04px;font-size:10px;line-height:10px;color:#2a2a2a;font-weight:400;white-space:nowrap;transform:scaleX(0.835);transform-origin:right;">11 235.3</div><div style="position:absolute;left:940px;top:458.3px;width:46.39999999999998px;height:23.1px;background:#fff;border:1px solid #e6e6e6;border-radius:3px;box-sizing:border-box;"></div><div style="position:absolute;right:43.200000000000045px;top:465.04px;font-size:10px;line-height:10px;color:#2a2a2a;font-weight:400;white-space:nowrap;transform:scaleX(0.835);transform-origin:right;">176 478.7</div><svg style="position:absolute;left:0;top:0" width="1024" height="484"><rect x="392.15" y="4.85" width="625.8" height="26.3" rx="0.8" fill="none" stroke="#ff0000" stroke-width="1.9"/><rect x="3.95" y="55.45" width="1018.1" height="58.2" rx="0.8" fill="none" stroke="#ff0000" stroke-width="1.9"/><rect x="1.95" y="141.25" width="1018.0" height="27.5" rx="0.8" fill="none" stroke="#ff0000" stroke-width="1.9"/></svg>
</body></html>
